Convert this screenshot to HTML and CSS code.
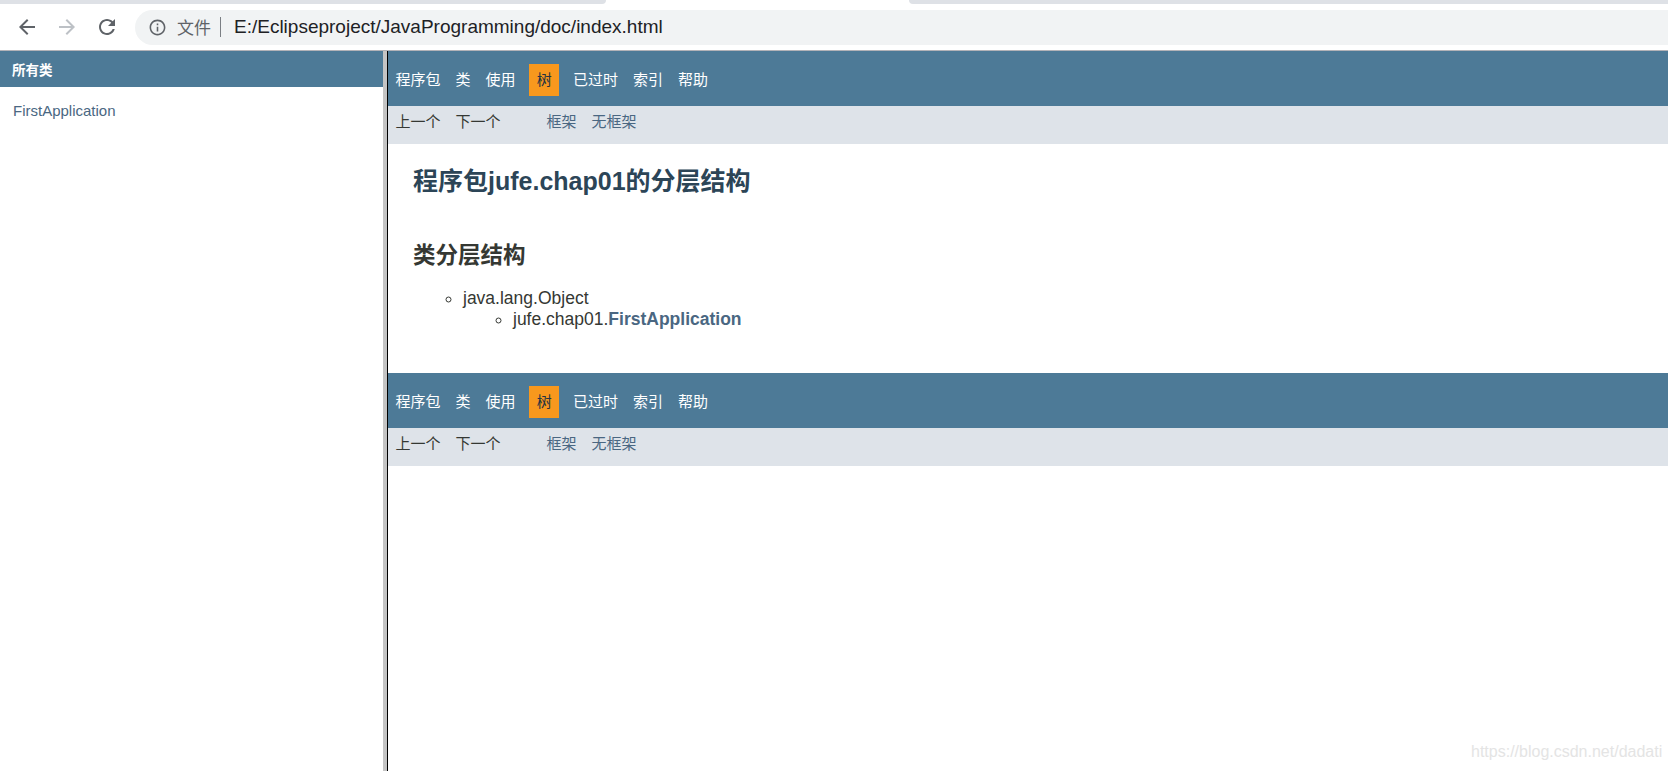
FILE: index.html
```html
<!DOCTYPE html>
<html lang="zh-CN">
<head>
<meta charset="utf-8">
<title>jufe.chap01 类分层结构</title>
<link rel="stylesheet" href="styles.css">
</head>
<body>
<div class="browser">
  <div class="tabstrip">
    <div class="tab-gap tab-gap-left"></div>
    <div class="tab-active"></div>
    <div class="tab-gap tab-gap-right"></div>
  </div>
  <div class="toolbar">
    <div class="navbtn">
      <svg viewBox="0 0 24 24"><path d="M20 11H7.83l5.59-5.59L12 4l-8 8 8 8 1.41-1.41L7.83 13H20v-2z"/></svg>
    </div>
    <div class="navbtn navbtn-disabled">
      <svg viewBox="0 0 24 24"><path d="M12 4l-1.41 1.41L16.17 11H4v2h12.17l-5.58 5.59L12 20l8-8z"/></svg>
    </div>
    <div class="navbtn">
      <svg viewBox="0 0 24 24"><path d="M17.65 6.35C16.2 4.9 14.21 4 12 4c-4.42 0-7.99 3.58-7.99 8s3.57 8 7.99 8c3.73 0 6.84-2.55 7.730-6h-2.08c-.82 2.33-3.04 4-5.65 4-3.31 0-6-2.69-6-6s2.69-6 6-6c1.66 0 3.14.69 4.22 1.78L13 11h7V4l-2.35 2.35z"/></svg>
    </div>
    <div class="omnibox">
      <svg class="info-icon" viewBox="0 0 24 24"><path d="M11 7h2v2h-2zm0 4h2v6h-2zm1-9C6.48 2 2 6.48 2 12s4.48 10 10 10 10-4.48 10-10S17.52 2 12 2zm0 18c-4.41 0-8-3.59-8-8s3.59-8 8-8 8 3.59 8 8-3.59 8-8 8z"/></svg>
      <span class="scheme">文件</span>
      <span class="sep"></span>
      <span class="url">E:/Eclipseproject/JavaProgramming/doc/index.html</span>
    </div>
  </div>
</div>

<div class="frames">
  <div class="frame-left">
    <div class="bar">所有类</div>
    <ul class="index-list">
      <li><a class="link">FirstApplication</a></li>
    </ul>
  </div>
  <div class="splitter"></div>
  <div class="frame-right">
    <div class="topnav">
      <ul class="navlist">
        <li>程序包</li>
        <li>类</li>
        <li>使用</li>
        <li class="active">树</li>
        <li>已过时</li>
        <li>索引</li>
        <li>帮助</li>
      </ul>
    </div>
    <div class="subnav">
      <ul class="navlist">
        <li>上一个</li>
        <li>下一个</li>
      </ul>
      <ul class="navlist navlist-frames">
        <li><a class="link">框架</a></li>
        <li><a class="link">无框架</a></li>
      </ul>
    </div>

    <div class="header">
      <h1 class="title">程序包jufe.chap01的分层结构</h1>
    </div>
    <div class="content">
      <h2 class="subtitle">类分层结构</h2>
      <ul class="hier">
        <li>java.lang.Object
          <ul class="hier-sub">
            <li>jufe.chap01.<a class="link strong">FirstApplication</a></li>
          </ul>
        </li>
      </ul>
    </div>

    <div class="topnav">
      <ul class="navlist">
        <li>程序包</li>
        <li>类</li>
        <li>使用</li>
        <li class="active">树</li>
        <li>已过时</li>
        <li>索引</li>
        <li>帮助</li>
      </ul>
    </div>
    <div class="subnav">
      <ul class="navlist">
        <li>上一个</li>
        <li>下一个</li>
      </ul>
      <ul class="navlist navlist-frames">
        <li><a class="link">框架</a></li>
        <li><a class="link">无框架</a></li>
      </ul>
    </div>
  </div>
</div>

<div class="watermark">https://blog.csdn.net/dadati</div>
</body>
</html>
```

FILE: styles.css
```css
* { box-sizing: border-box; }

html, body {
  margin: 0;
  padding: 0;
}

body {
  position: relative;
  width: 1668px;
  height: 771px;
  overflow: hidden;
  background: #ffffff;
  font-family: "Liberation Sans", "Noto Sans CJK SC", sans-serif;
  color: #353833;
}

/* ---------- browser chrome ---------- */
.browser {
  height: 51px;
  background: #ffffff;
  border-bottom: 1px solid #b3b3b8;
}

.tabstrip {
  display: flex;
  height: 4px;
}

.tab-gap {
  background: #dee1e6;
}

.tab-gap-left {
  width: 606px;
  border-bottom-right-radius: 4px;
}

.tab-active {
  width: 303px;
}

.tab-gap-right {
  flex: 1;
  border-bottom-left-radius: 4px;
}

.toolbar {
  height: 46px;
  display: flex;
  align-items: center;
  padding-left: 7px;
}

.navbtn {
  width: 40px;
  height: 36px;
  display: flex;
  align-items: center;
  justify-content: center;
  flex: none;
}

.navbtn svg {
  width: 24px;
  height: 24px;
  fill: #5f6368;
}

.navbtn-disabled svg {
  fill: #bdc1c6;
}

.omnibox {
  flex: 1;
  margin-left: 8px;
  height: 35px;
  background: #f1f3f4;
  border-radius: 18px 0 0 18px;
  display: flex;
  align-items: center;
  padding-left: 13px;
}

.info-icon {
  width: 19px;
  height: 19px;
  fill: #5f6368;
  flex: none;
}

.scheme {
  margin-left: 10px;
  font-family: "Noto Sans CJK SC", sans-serif;
  font-size: 17px;
  line-height: 20px;
  color: #5f6368;
}

.sep {
  width: 1px;
  height: 20px;
  background: #7b7f84;
  margin-left: 9px;
}

.url {
  margin-left: 13px;
  font-family: "Liberation Sans", sans-serif;
  font-size: 19px;
  line-height: 22px;
  color: #202124;
  white-space: nowrap;
}

/* ---------- frames ---------- */
.frames {
  display: flex;
  height: 720px;
}

.frame-left {
  width: 383px;
  flex: none;
  background: #ffffff;
}

.bar {
  height: 36px;
  background: #4d7a97;
  color: #ffffff;
  font-size: 13.5px;
  font-weight: bold;
  line-height: 16px;
  padding: 4px 0 0 12px;
  display: flex;
  align-items: center;
}

.index-list {
  list-style: none;
  margin: 15px 0 0;
  padding: 0 0 0 13px;
  font-size: 15px;
  line-height: 17px;
}

.link {
  color: #4a6782;
  text-decoration: none;
}

.strong {
  font-weight: bold;
}

.splitter {
  width: 4px;
  flex: none;
  background: #c4c4c4;
}

.frame-right {
  flex: 1;
  border-left: 1px solid #000000;
  background: #ffffff;
}

.topnav {
  height: 55px;
  padding-top: 13px;
  background: #4d7a97;
}

.navlist {
  display: flex;
  list-style: none;
  margin: 0;
  padding: 0;
}

.navlist li {
  padding: 6.25px 7.5px;
  font-size: 15px;
  line-height: 19.5px;
  white-space: nowrap;
}

.topnav .navlist li {
  color: #ffffff;
}

.topnav .navlist li.active {
  background: #f8981d;
  color: #253441;
  margin: 0 6.25px;
}

.subnav {
  height: 38px;
  background: #dee3e9;
  display: flex;
  align-items: flex-start;
}

.subnav .navlist li {
  color: #353833;
}

.navlist-frames {
  margin-left: 31px;
}

.header {
  padding: 0 25px;
}

.title {
  margin: 22px 0 0;
  font-size: 25px;
  line-height: 30px;
  font-weight: bold;
  color: #2c4557;
}

.content {
  padding: 0 25px 44px;
}

.subtitle {
  margin: 46px 0 0;
  font-size: 22.5px;
  line-height: 28px;
  font-weight: bold;
  color: #353833;
}

.hier {
  margin: 18px 0 0;
  padding-left: 50px;
  list-style-type: circle;
  font-size: 17.5px;
  line-height: 20.5px;
  color: #353833;
}

.hier-sub {
  margin: 0;
  padding-left: 50px;
  list-style-type: circle;
}

.watermark {
  position: absolute;
  left: 1471px;
  top: 743px;
  font-family: "Liberation Sans", sans-serif;
  font-size: 16px;
  line-height: 18px;
  color: #e4e4e4;
  white-space: nowrap;
}
```
